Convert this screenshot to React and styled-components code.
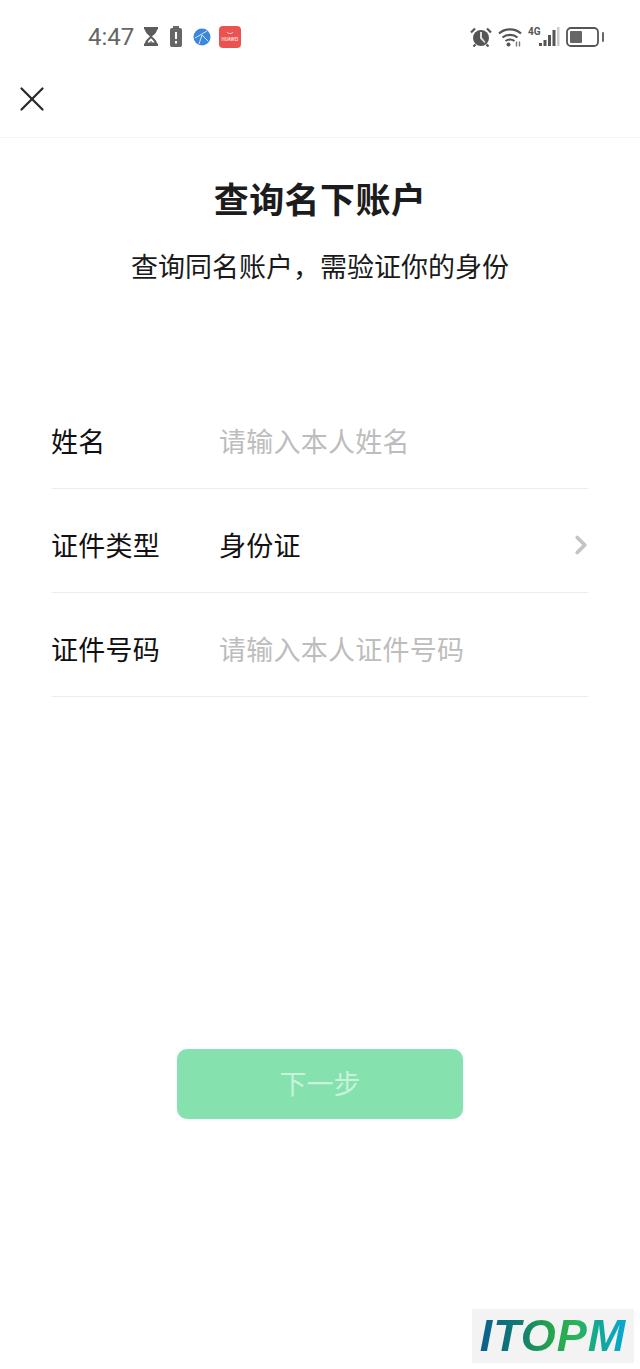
import React from "react";
import styled, { createGlobalStyle } from "styled-components";
import { ChevronRight, X } from "lucide-react";

const GlobalStyle = createGlobalStyle`
  html, body {
    margin: 0;
    padding: 0;
    background: #fff;
  }
  body {
    font-family: "Noto Sans CJK SC", "Noto Sans", sans-serif;
  }
`;

const Page = styled.div`
  position: relative;
  width: 640px;
  height: 1369px;
  overflow: hidden;
  background: #fff;
`;

const StatusBar = styled.div`
  display: flex;
  align-items: center;
  justify-content: space-between;
  height: 74px;
  padding: 0 36px 0 88px;
  box-sizing: border-box;
`;

const StatusGroup = styled.div`
  display: flex;
  align-items: center;
  gap: ${(p) => p.$gap}px;
`;

const Time = styled.span`
  font-family: Roboto, sans-serif;
  font-size: 24px;
  color: #666;
  width: 45px;
`;

const NavBar = styled.div`
  display: flex;
  align-items: center;
  height: 64px;
  padding: 0 0 13px 11px;
  box-sizing: border-box;
  border-bottom: 1px solid #f3f3f3;
`;

const Heading = styled.h1`
  margin: 34px 0 0;
  text-align: center;
  font-size: 35px;
  line-height: 52px;
  letter-spacing: 0.4px;
  font-weight: 700;
  color: #1c1c1c;
`;

const SubHeading = styled.p`
  margin: 22px 0 0;
  text-align: center;
  font-size: 27px;
  line-height: 40px;
  color: #1a1a1a;
`;

const Form = styled.div`
  margin: 99px 52px 0;
`;

const Row = styled.div`
  display: flex;
  align-items: center;
  height: 104px;
  padding-top: 8px;
  box-sizing: border-box;
  border-bottom: 1px solid #ececec;
  font-size: 27px;
  letter-spacing: 0.25px;
`;

const Label = styled.span`
  width: 168px;
  margin-left: -1px;
  color: #111;
`;

const Value = styled.span`
  flex: 1;
  color: ${(p) => (p.$placeholder ? "#bdbdbd" : "#111")};
`;

const RowArrow = styled(ChevronRight)`
  margin-right: -8px;
  color: #c4c4c4;
`;

const Actions = styled.div`
  display: flex;
  justify-content: center;
  margin-top: 352px;
`;

const NextButton = styled.button`
  width: 286px;
  height: 70px;
  border: 0;
  border-radius: 10px;
  background: #85e1ae;
  color: #c9f2db;
  font-family: inherit;
  font-size: 27px;
  padding: 0 0 4px;
`;

const Watermark = styled.div`
  position: absolute;
  left: 472px;
  top: 1309px;
  width: 162px;
  height: 54px;
  display: flex;
  align-items: center;
  justify-content: center;
  background: #f3f3f3;
`;

const WatermarkText = styled.span`
  font-family: "Liberation Sans", sans-serif;
  font-size: 45px;
  line-height: 54px;
  font-weight: 700;
  font-style: italic;
  letter-spacing: 1px;
  background: linear-gradient(90deg, #0c5f8f 0%, #107a72 26%, #27a64c 50%, #2bb35a 66%, #10a79a 82%, #0aa6d2 100%);
  -webkit-background-clip: text;
  background-clip: text;
  color: transparent;
`;

const StoreIcon = styled.svg`
  margin-left: -2px;
`;

const Hourglass = () => (
  <svg width="16" height="20" viewBox="0 0 16 20">
    <path d="M1 0h14v2.500h-1c0 3-3 5-5 7 2 2 5 4 5 7h1V19H1v-2.500h1c0-3 3-5 5-7-2-2-5-4-5-7H1z" fill="#5c5c5c" />
    <path d="M4.500 15.500c.8-1.800 2-3 3.500-4.300 1.500 1.300 2.700 2.500 3.500 4.300z" fill="#fff" />
    <path d="M6 15.500 8 14l2 1.500z" fill="#5c5c5c" />
  </svg>
);

const AlertBattery = () => (
  <svg width="14" height="22" viewBox="0 0 14 22">
    <rect x="4" y="0" width="6" height="2" fill="#666" />
    <rect x="1" y="2" width="12" height="19" rx="2" fill="#666" />
    <rect x="6" y="6" width="2" height="7" fill="#fff" />
    <rect x="6" y="15" width="2" height="2.500" fill="#fff" />
  </svg>
);

const GlobeApp = () => (
  <svg width="18" height="18" viewBox="0 0 18 18">
    <circle cx="9" cy="9" r="8.500" fill="#3b87dc" />
    <path d="M2 10 L14 3 M9 7 L15 13 M9 7 L6 16" stroke="#d5e6f8" strokeWidth="1" fill="none" />
  </svg>
);

const StoreApp = () => (
  <StoreIcon width="22" height="22" viewBox="0 0 22 22">
    <rect width="22" height="22" rx="4" fill="#ea5350" />
    <path d="M8 6c.8 2 5.200 2 6 0" stroke="#fbd5d4" strokeWidth="1" fill="none" />
    <text x="11" y="15" textAnchor="middle" fontFamily="Roboto, sans-serif" fontSize="4.500" fontWeight="700" fill="#fbd5d4">HUAWEI</text>
  </StoreIcon>
);

const Alarm = () => (
  <svg width="22" height="20" viewBox="0 0 22 20">
    <path d="M1 5.500 5 1.500M21 5.500 17 1.500M5.500 17.500 3.500 19.500M16.500 17.500l2 2" stroke="#555" strokeWidth="2.200" />
    <circle cx="11" cy="11" r="8" fill="#555" />
    <path d="M10 5v6.500l4.500 4.500 1-1-3.500-4.500V5z" fill="#ddd" />
  </svg>
);

const Wifi = () => (
  <svg width="24" height="20" viewBox="0 0 24 20">
    <g stroke="#555" strokeWidth="2.200" fill="none">
      <path d="M1 6.500c6-5.500 16-5.500 22 0" />
      <path d="M4.500 10.500c4-3.500 11-3.500 15 0" />
      <path d="M7.500 14c2.500-2 6.500-2 9 0" />
    </g>
    <circle cx="10.500" cy="17.500" r="2" fill="#555" />
    <path d="M18.500 14.500v5M21.500 14.500v5" stroke="#777" strokeWidth="1.400" />
  </svg>
);

const Signal = () => (
  <svg width="32" height="20" viewBox="0 0 32 20">
    <text x="0" y="8" fontFamily="Roboto, sans-serif" fontSize="10" fontWeight="700" fill="#555">4G</text>
    <rect x="11" y="16" width="3" height="3" fill="#555" />
    <rect x="15.500" y="13" width="3" height="6" fill="#555" />
    <rect x="20" y="8" width="3" height="11" fill="#555" />
    <rect x="24.500" y="3" width="3" height="16" fill="#555" />
    <rect x="29" y="0" width="2.500" height="19" fill="#ccc" />
  </svg>
);

const Battery = () => (
  <svg width="38" height="20" viewBox="0 0 38 20">
    <rect x="1" y="1" width="31" height="18" rx="4" fill="none" stroke="#555" strokeWidth="1.800" />
    <rect x="4" y="4" width="12" height="12" rx="1" fill="#666" />
    <rect x="36" y="5" width="2" height="10" rx="1" fill="#666" />
  </svg>
);

export default function App() {
  return (
    <Page>
      <GlobalStyle />
      <StatusBar>
        <StatusGroup $gap={10}>
          <Time>4:47</Time>
          <Hourglass />
          <AlertBattery />
          <GlobeApp />
          <StoreApp />
        </StatusGroup>
        <StatusGroup $gap={6}>
          <Alarm />
          <Wifi />
          <Signal />
          <Battery />
        </StatusGroup>
      </StatusBar>
      <NavBar>
        <X size={42} strokeWidth={1.3} color="#2a2a2a" />
      </NavBar>
      <Heading>查询名下账户</Heading>
      <SubHeading>查询同名账户，需验证你的身份</SubHeading>
      <Form>
        <Row>
          <Label>姓名</Label>
          <Value $placeholder>请输入本人姓名</Value>
        </Row>
        <Row>
          <Label>证件类型</Label>
          <Value>身份证</Value>
          <RowArrow size={30} strokeWidth={3} />
        </Row>
        <Row>
          <Label>证件号码</Label>
          <Value $placeholder>请输入本人证件号码</Value>
        </Row>
      </Form>
      <Actions>
        <NextButton>下一步</NextButton>
      </Actions>
      <Watermark>
        <WatermarkText>ITOPM</WatermarkText>
      </Watermark>
    </Page>
  );
}
